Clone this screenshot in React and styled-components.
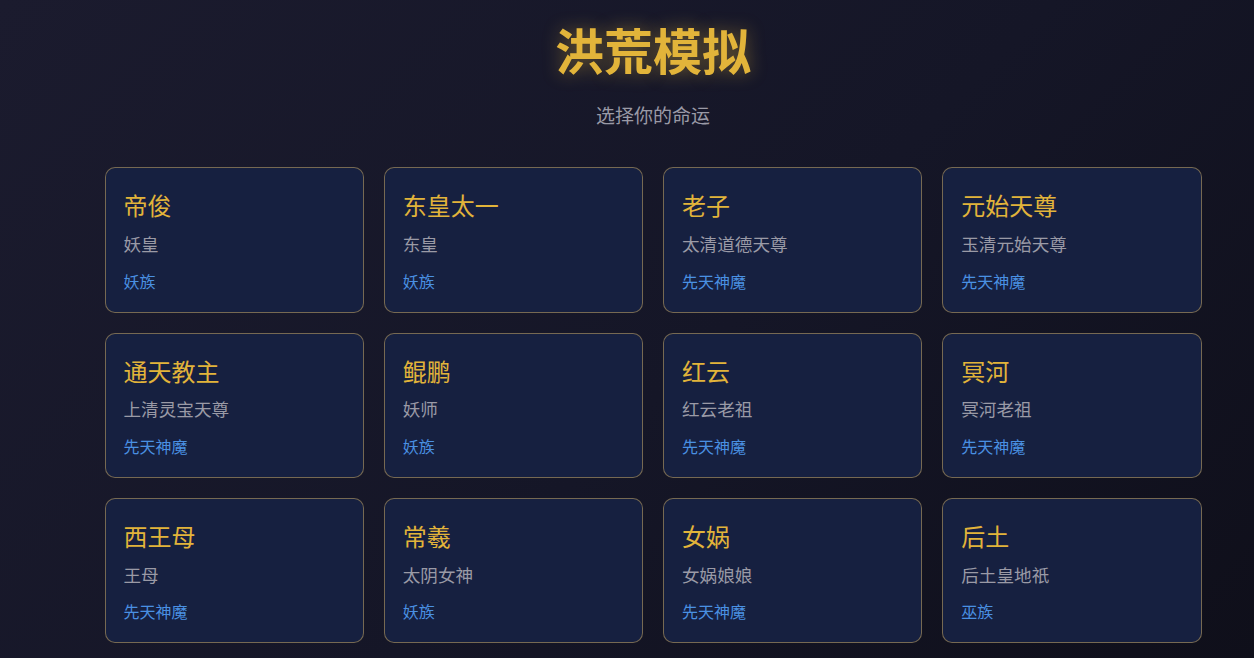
import React from 'react';
import styled, { createGlobalStyle } from 'styled-components';

const CHARACTERS = [
  { name: '帝俊', title: '妖皇', race: '妖族' },
  { name: '东皇太一', title: '东皇', race: '妖族' },
  { name: '老子', title: '太清道德天尊', race: '先天神魔' },
  { name: '元始天尊', title: '玉清元始天尊', race: '先天神魔' },
  { name: '通天教主', title: '上清灵宝天尊', race: '先天神魔' },
  { name: '鲲鹏', title: '妖师', race: '妖族' },
  { name: '红云', title: '红云老祖', race: '先天神魔' },
  { name: '冥河', title: '冥河老祖', race: '先天神魔' },
  { name: '西王母', title: '王母', race: '先天神魔' },
  { name: '常羲', title: '太阴女神', race: '妖族' },
  { name: '女娲', title: '女娲娘娘', race: '先天神魔' },
  { name: '后土', title: '后土皇地祇', race: '巫族' },
];

const GlobalStyle = createGlobalStyle`
  html, body {
    margin: 0;
    padding: 0;
    min-height: 100%;
  }
  body {
    background: linear-gradient(135deg, #1b1b2e 0%, #151627 55%, #0f0f1a 100%);
    min-height: 100vh;
    font-family: "Noto Sans CJK SC", "Noto Sans", sans-serif;
    color: #e0e0e0;
  }
`;

const App = () => {
  return (
    <>
      <GlobalStyle />
      <Page>
        <Header>
          <Title>洪荒模拟</Title>
          <Subtitle>选择你的命运</Subtitle>
        </Header>
        <Grid>
          {CHARACTERS.map((c) => (
            <Card key={c.name}>
              <Name>{c.name}</Name>
              <Rank>{c.title}</Rank>
              <Race>{c.race}</Race>
            </Card>
          ))}
        </Grid>
      </Page>
    </>
  );
};

const Page = styled.main`
  padding: 20px 0 20px 52px;
`;

const Header = styled.header`
  text-align: center;
  margin-bottom: 39px;
`;

const Title = styled.h1`
  margin: 0;
  font-size: 49px;
  line-height: 1.2;
  font-weight: 700;
  color: #e2b43a;
  text-shadow: 0 0 18px rgba(226, 180, 58, 0.45);
`;

const Subtitle = styled.p`
  margin: 23px 0 0;
  font-size: 19px;
  line-height: 1.4;
  color: #9a9aa6;
`;

const Grid = styled.div`
  max-width: 1097px;
  margin: 0 auto;
  display: grid;
  grid-template-columns: repeat(4, 1fr);
  gap: 20px;
`;

const Card = styled.article`
  background: #162040;
  border: 1px solid rgba(214, 178, 100, 0.5);
  border-radius: 10px;
  padding: 23px 18px 19px;
  display: flex;
  flex-direction: column;
`;

const Name = styled.h3`
  margin: 0 0 11px;
  font-size: 24px;
  line-height: 1.2;
  font-weight: 400;
  color: #e2b43a;
`;

const Rank = styled.p`
  margin: 0 0 11px;
  font-size: 17.6px;
  line-height: 1.5;
  color: #9a9aa6;
`;

const Race = styled.span`
  font-size: 16px;
  line-height: 1.5;
  color: #4a90e2;
`;

export default App;
